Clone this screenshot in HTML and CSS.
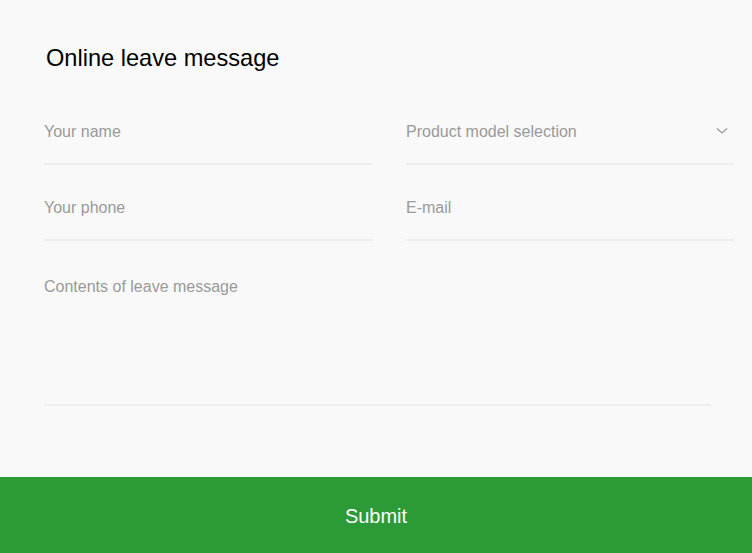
FILE: index.html
```html
<!DOCTYPE html>
<html lang="en">
<head>
<meta charset="utf-8">
<title>Online leave message</title>
<link rel="stylesheet" href="styles.css">
</head>
<body>
<form class="form">
  <div class="form-body">
    <h1 class="title">Online leave message</h1>
    <div class="fields">
      <input class="field" type="text" placeholder="Your name">
      <div class="field select">
        <span class="select-text">Product model selection</span>
        <svg class="chevron" width="12" height="8" viewBox="0 0 12 8"><path d="M1 1.5 L6 6 L11 1.5" fill="none" stroke="#999" stroke-width="1.2"/></svg>
      </div>
      <input class="field" type="text" placeholder="Your phone">
      <input class="field" type="text" placeholder="E-mail">
    </div>
    <textarea class="message" placeholder="Contents of leave message"></textarea>
  </div>
  <button class="submit" type="button">Submit</button>
</form>
</body>
</html>
```
FILE: styles.css
```css
html, body {
  margin: 0;
  padding: 0;
  background: #f9f9f9;
  font-family: "Liberation Sans", Arial, sans-serif;
}
.form {
  display: flex;
  flex-direction: column;
}
.form-body {
  padding: 44px 18px 0 44px;
}
.title {
  margin: 0 0 0 2px;
  font-size: 23.6px;
  line-height: 28px;
  font-weight: normal;
  color: #000;
}
.fields {
  margin-top: 48px;
  display: grid;
  grid-template-columns: 329px 328px;
  column-gap: 33px;
  row-gap: 31px;
}
.field {
  display: block;
  width: 100%;
  box-sizing: border-box;
  height: 45px;
  margin: 0;
  padding: 2px 0 21px 0;
  border: none;
  border-bottom: 2px solid #eeeeee;
  background: transparent;
  font-family: inherit;
  font-size: 16px;
  line-height: 20px;
  color: #333;
  outline: none;
}
.field::placeholder,
.message::placeholder {
  color: #999;
  opacity: 1;
}
.select {
  display: flex;
  justify-content: space-between;
  align-items: flex-start;
}
.select-text {
  color: #999;
}
.chevron {
  margin-top: 5px;
  margin-right: 6px;
}
.message {
  display: block;
  margin: 34px 0 0 0;
  width: 667px;
  height: 131px;
  box-sizing: border-box;
  padding: 2px 0 0 0;
  border: none;
  border-bottom: 2px solid #eeeeee;
  background: transparent;
  resize: none;
  font-family: inherit;
  font-size: 16px;
  line-height: 20px;
  color: #333;
  outline: none;
}
.submit {
  margin-top: 71px;
  width: 100%;
  height: 76px;
  padding: 2px 0 0 0;
  border: none;
  background: #2c9a37;
  color: #fff;
  font-family: inherit;
  font-size: 20px;
  cursor: pointer;
}
```
